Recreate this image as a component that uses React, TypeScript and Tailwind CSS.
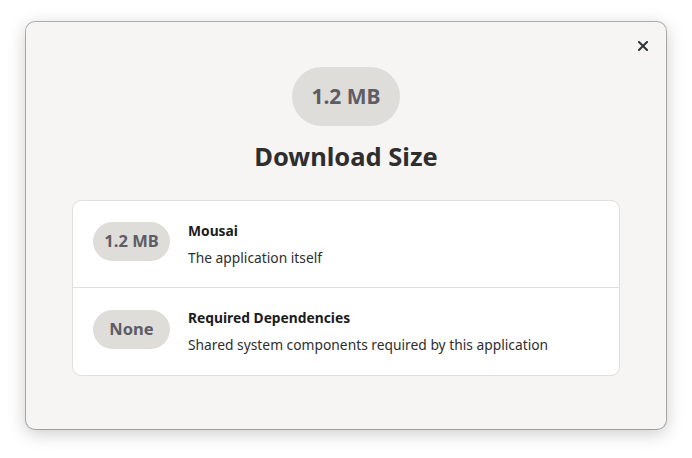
import React from 'react';

interface SizeRowProps {
  size: string;
  title: string;
  subtitle: string;
  last?: boolean;
}

const SizeRow: React.FC<SizeRowProps> = ({ size, title, subtitle, last }) => {
  return (
    <div
      className={`flex items-center h-[87px] pl-[20px] pr-4 ${last ? '' : 'border-b border-[#e0dfdd]'}`}
    >
      <div className="mb-[5px] w-[77px] h-[39px] rounded-full bg-[#deddda] flex items-center justify-center text-[16.5px] font-bold text-[#5e5c64]">
        {size}
      </div>
      <div className="ml-[18px] flex flex-col">
        <span className="text-[13.8px] font-bold text-[#1c1c1c] leading-[20px]">{title}</span>
        <span className="mt-[7px] text-[13.8px] text-[#2e2e2e] leading-[20px]">{subtitle}</span>
      </div>
    </div>
  );
};

export default function App() {
  return (
    <div
      className="min-h-screen bg-white pt-[22px] pl-[26px]"
      style={{ fontFamily: '"Noto Sans", "Open Sans", sans-serif' }}
    >
      <div className="relative w-[640px] h-[407px] rounded-[9px] bg-[#f6f5f4] shadow-[0_0_0_1px_rgba(0,0,0,0.28),0_4px_18px_rgba(0,0,0,0.22)]">
        <button className="absolute top-[17px] right-[16px] w-[14px] h-[14px] flex items-center justify-center text-[#2e3436]">
          <svg width="10" height="10" viewBox="0 0 10 10">
            <path d="M1 1L9 9M9 1L1 9" stroke="currentColor" strokeWidth="2" strokeLinecap="square" />
          </svg>
        </button>
        <div className="flex flex-col items-center pt-[45px]">
          <div className="h-[59px] px-[19px] rounded-full bg-[#deddda] flex items-center text-[21px] font-bold text-[#5e5c64]">
            1.2 MB
          </div>
          <h1 className="mt-[14px] text-[25.5px] leading-[32px] font-bold text-[#2e2e2e]">Download Size</h1>
          <div className="mt-[28px] w-[548px] bg-white rounded-[9px] border border-[#e0dfdd] overflow-hidden">
            <SizeRow size="1.2 MB" title="Mousai" subtitle="The application itself" />
            <SizeRow
              size="None"
              title="Required Dependencies"
              subtitle="Shared system components required by this application"
              last
            />
          </div>
        </div>
      </div>
    </div>
  );
}
